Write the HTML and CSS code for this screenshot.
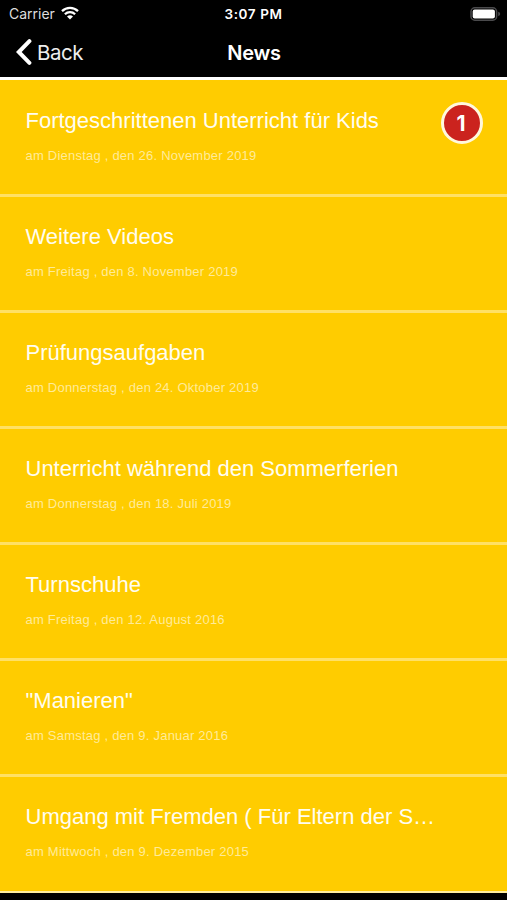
FILE: index.html
```html
<!DOCTYPE html>
<html lang="de">
<head>
  <meta charset="UTF-8">
  <meta name="viewport" content="width=device-width, initial-scale=1.0">
  <title>News</title>
  <link rel="stylesheet" href="styles.css">
</head>
<body>
  <header>
    <div class="status-bar">
      <div class="carrier">
        <span class="carrier-name">Carrier</span>
        <svg class="wifi" viewBox="0 0 18 14" width="18" height="14">
          <path d="M1 5.2a11.5 11.5 0 0 1 16 0M3.9 8.2a7.3 7.3 0 0 1 10.2 0" fill="none" stroke="#fff" stroke-width="2.3"/>
          <path d="M9 13.6l-3-3a4.3 4.3 0 0 1 6 0z" fill="#fff"/>
        </svg>
      </div>
      <div class="time">3:07 PM</div>
      <div class="battery-wrap">
        <svg viewBox="0 0 31 14" width="31" height="14">
          <rect x="1" y=".8" width="25.6" height="12.4" rx="3.8" fill="none" stroke="#4a4a4c" stroke-width="1.5"/>
          <rect x="2.7" y="2.5" width="22.2" height="9" rx="2" fill="#fff"/>
          <path d="M28.2 4.8q2 .6 2 2.2t-2 2.2z" fill="#4a4a4c"/>
        </svg>
      </div>
    </div>
    <nav class="nav-bar">
      <a href="#" class="back">
        <svg viewBox="0 0 16 28" width="16" height="28">
          <path d="M13.4 3.2L2.8 14l10.6 10.8" fill="none" stroke="#fff" stroke-width="4" stroke-linecap="round"/>
        </svg>
        <span class="back-text">Back</span>
      </a>
      <h1>News</h1>
    </nav>
  </header>

  <main class="news-list">
    <a href="#" class="news-item">
      <div class="news-title">Fortgeschrittenen Unterricht für Kids</div>
      <div class="news-date">am Dienstag , den 26. November 2019</div>
      <span class="badge">
        <span class="badge-count">1</span>
      </span>
    </a>
    <a href="#" class="news-item">
      <div class="news-title">Weitere Videos</div>
      <div class="news-date">am Freitag , den 8. November 2019</div>
    </a>
    <a href="#" class="news-item">
      <div class="news-title">Prüfungsaufgaben</div>
      <div class="news-date">am Donnerstag , den 24. Oktober 2019</div>
    </a>
    <a href="#" class="news-item">
      <div class="news-title">Unterricht während den Sommerferien</div>
      <div class="news-date">am Donnerstag , den 18. Juli 2019</div>
    </a>
    <a href="#" class="news-item">
      <div class="news-title">Turnschuhe</div>
      <div class="news-date">am Freitag , den 12. August 2016</div>
    </a>
    <a href="#" class="news-item">
      <div class="news-title">"Manieren"</div>
      <div class="news-date">am Samstag , den 9. Januar 2016</div>
    </a>
    <a href="#" class="news-item">
      <div class="news-title">Umgang mit Fremden ( Für Eltern der S…</div>
      <div class="news-date">am Mittwoch , den 9. Dezember 2015</div>
    </a>
  </main>
</body>
</html>
```
FILE: styles.css
```css
* {
  box-sizing: border-box;
}

body {
  margin: 0;
  height: 900px;
  background: #000;
  color: #fff;
  font-family: "Liberation Sans", Arial, sans-serif;
  overflow: hidden;
}

a {
  color: inherit;
  text-decoration: none;
}

header {
  height: 77px;
  background: #000;
}

.status-bar {
  display: grid;
  grid-template-columns: 1fr auto 1fr;
  align-items: center;
  height: 27px;
  padding: 0 6px 0 9px;
  font-family: Inter, sans-serif;
}

.carrier {
  display: flex;
  align-items: center;
  gap: 6px;
}

.carrier-name {
  font-size: 14px;
  color: #ddd;
}

.wifi {
  margin-top: -1px;
}

.time {
  padding-right: 3px;
  font-size: 13.5px;
  font-weight: 600;
  letter-spacing: 0.6px;
}

.battery-wrap {
  display: flex;
  justify-content: flex-end;
}

.nav-bar {
  display: grid;
  grid-template-columns: 1fr auto 1fr;
  align-items: center;
  height: 50px;
  padding: 0 15px 0 16px;
  font-family: Inter, sans-serif;
}

.back {
  display: flex;
  align-items: center;
  gap: 5px;
  font-size: 20.5px;
  letter-spacing: -0.5px;
  color: #eee;
}

h1 {
  margin: 2px 0 0;
  font-size: 20px;
  font-weight: 600;
  letter-spacing: -0.2px;
}

.news-list {
  border-top: 3px solid #fff;
}

.news-item {
  display: block;
  position: relative;
  height: 116px;
  padding: 27px 25px 0;
  background: #ffcc00;
  border-bottom: 3px solid #ffe066;
}

.news-item:first-child {
  height: 117px;
}

.news-item + .news-item {
  padding-top: 26px;
}

.news-item:last-child {
  border-bottom: 2px solid #ffeea0;
}

.news-title {
  padding-left: 0.5px;
  font-size: 22px;
  line-height: 28px;
  white-space: nowrap;
  color: #fffdf0;
}

.news-date {
  margin-top: 13px;
  padding-left: 0.5px;
  font-size: 13px;
  line-height: 16px;
  letter-spacing: 0.22px;
  color: #ffeb99;
}

.badge {
  display: flex;
  align-items: center;
  justify-content: center;
  position: absolute;
  top: 22px;
  right: 24px;
  width: 42px;
  height: 42px;
  border: 3px solid #fff8dd;
  border-radius: 50%;
  background: #cb231e;
}

.badge-count {
  padding: 2px 2px 0 0;
  font-family: Inter, sans-serif;
  font-size: 21px;
  font-weight: 700;
  line-height: 26px;
}
```
